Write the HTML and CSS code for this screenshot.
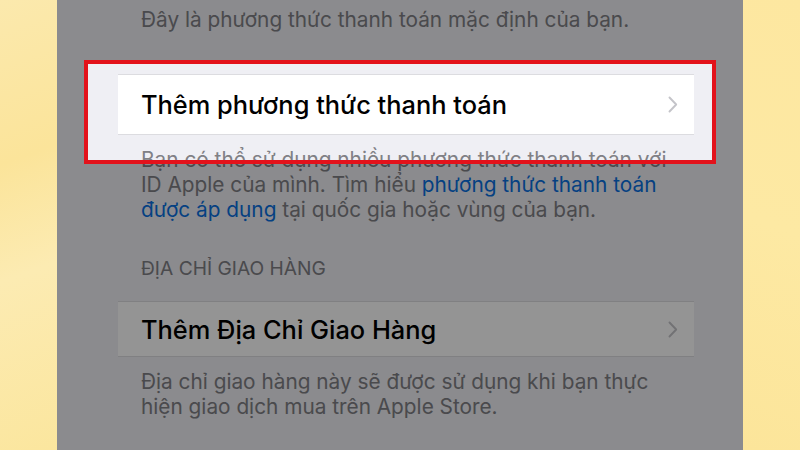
FILE: index.html
```html
<!DOCTYPE html>
<html lang="vi">
<head>
  <meta charset="UTF-8"/>
  <meta name="viewport" content="width=device-width, initial-scale=1.0"/>
  <title>Thanh toán và giao hàng</title>
  <link rel="stylesheet" href="styles.css">
</head>
<body>
  <div class="side side-left"></div>

  <div class="phone">
    <p class="note note-top">Đây là phương thức thanh toán mặc định của bạn.</p>

    <div class="row row-pay">
      <span>Thêm phương thức thanh toán</span>
      <svg class="chevron" width="10" height="17" viewBox="0 0 10 17"><path d="M1.5 1.5 L8.2 8.5 L1.5 15.5" fill="none" stroke="currentColor" stroke-width="1.9" stroke-linecap="round" stroke-linejoin="round"/></svg>
    </div>
    <p class="note note-pay">Bạn có thể sử dụng nhiều phương thức thanh toán với ID Apple của mình. Tìm hiểu <a href="#">phương thức thanh toán</a> <a href="#">được áp dụng</a> tại quốc gia hoặc vùng của bạn.</p>

    <h3 class="group-title">ĐỊA CHỈ GIAO HÀNG</h3>
    <div class="row row-ship">
      <span>Thêm Địa Chỉ Giao Hàng</span>
      <svg class="chevron" width="10" height="17" viewBox="0 0 10 17"><path d="M1.5 1.5 L8.2 8.5 L1.5 15.5" fill="none" stroke="currentColor" stroke-width="1.9" stroke-linecap="round" stroke-linejoin="round"/></svg>
    </div>
    <p class="note note-ship">Địa chỉ giao hàng này sẽ được sử dụng khi bạn thực hiện giao dịch mua trên Apple Store.</p>

    <!-- highlight box over the first row, dims the rest of the screen -->
    <div class="spotlight"></div>
  </div>

  <div class="side side-right"></div>
</body>
</html>
```

FILE: styles.css
```css
:root {
  --bg: #efeff4;
  --row: #ffffff;
  --line: #dcdce0;
  --note: #808085;
  --link: #0a70e0;
  --chev: #c4c4c9;
  --mark: #e3121b;
}

* {
  box-sizing: border-box;
}

html, body {
  height: 100%;
}

body {
  margin: 0;
  display: flex;
  height: 450px;
  overflow: hidden;
  font-family: Inter, "Noto Sans", sans-serif;
  background: #fbe7a2;
}

.side {
  width: 57px;
  flex: none;
}

.side-left {
  background: linear-gradient(160deg, #fbe9ad 0%, #fbe49a 35%, #fcebb2 60%, #fbe69e 100%);
}

.side-right {
  background: linear-gradient(200deg, #fde7a0 0%, #fde9a3 50%, #fce59a 100%);
}

.phone {
  position: relative;
  flex: 1;
  overflow: hidden;
  background-color: var(--bg);
  padding: 8px 49px 0 61px;
}

.note {
  margin: 0;
  padding: 0 23px;
  font-size: 20.8px;
  line-height: 25px;
  color: var(--note);
}

.note a {
  color: var(--link);
  text-decoration: none;
}

.note-top {
  line-height: 24px;
}

.row {
  display: flex;
  align-items: center;
  justify-content: space-between;
  padding: 0 16px 0 23px;
  background-color: var(--row);
  border-top: 1px solid var(--line);
  border-bottom: 1px solid var(--line);
  font-size: 25.4px;
  font-weight: 500;
  color: #000;
}

.row-pay {
  height: 61px;
  margin-top: 42px;
}

.row-ship {
  height: 56px;
  margin-top: 23px;
}

.chevron {
  color: var(--chev);
}

.note-pay {
  margin-top: 12px;
}

.group-title {
  margin: 36px 0 0;
  padding: 0 23px;
  font-size: 19.2px;
  font-weight: 400;
  line-height: 20px;
  color: var(--note);
}

.note-ship {
  margin-top: 12px;
}

.spotlight {
  position: absolute;
  left: 27px;
  top: 60px;
  width: 632px;
  height: 104px;
  border: 4px solid var(--mark);
  box-shadow: 0 0 0 1200px rgba(0, 0, 0, 0.42);
}
```
